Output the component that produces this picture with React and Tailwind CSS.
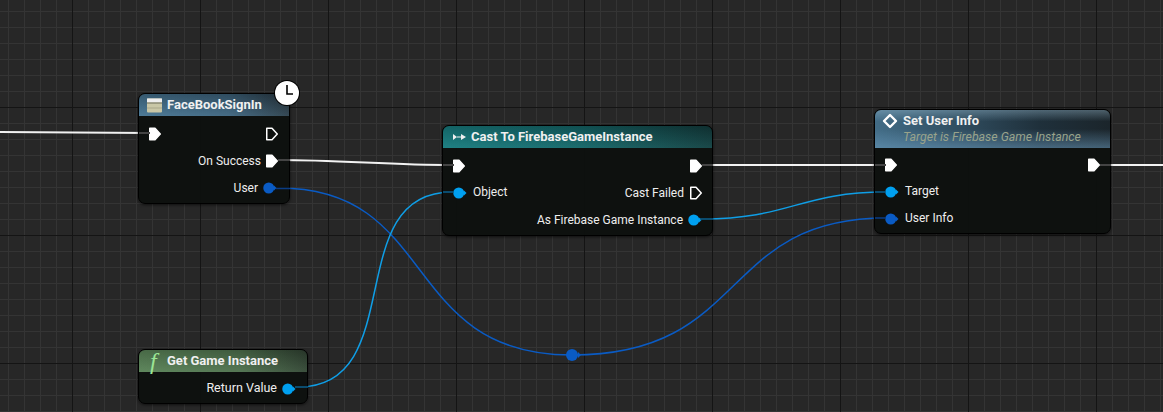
const grid =
  'bg-[#272727] bg-[linear-gradient(to_right,#141414_1px,transparent_1px),linear-gradient(to_bottom,#141414_1px,transparent_1px),linear-gradient(to_right,#343434_1px,transparent_1px),linear-gradient(to_bottom,#343434_1px,transparent_1px)] bg-[size:128px_128px,128px_128px,16px_16px,16px_16px] bg-[position:72px_107px,72px_107px,8px_11px,8px_11px]'

const wires = [
  { d: 'M0 132 C50 132 100 133 150 133', color: '#f2f2f2', width: 2 },
  { d: 'M278 160 C340 160 390 165 452 165', color: '#f2f2f2', width: 2 },
  { d: 'M702 165 L884 165', color: '#f2f2f2', width: 2 },
  { d: 'M1100 165 L1163 165', color: '#f2f2f2', width: 2 },
  { d: 'M279 188 C439 188 400 355 572 355', color: '#0a5bc4', width: 1.5 },
  { d: 'M572 355 C750 355 718 218 886 218', color: '#0a5bc4', width: 1.5 },
  { d: 'M298 387 C410 387 340 192 452 192', color: '#0f9ee6', width: 1.5 },
  { d: 'M702 219 C790 219 800 192 886 192', color: '#0f9ee6', width: 1.5 },
]

// dimmed part of each wire where it runs over a node
const stubs = [
  { x1: 139, x2: 150, y: 133, color: '#444444', width: 2 },
  { x1: 278, x2: 290, y: 160, color: '#444444', width: 2 },
  { x1: 443, x2: 454, y: 165, color: '#444444', width: 2 },
  { x1: 702, x2: 713, y: 165, color: '#444444', width: 2 },
  { x1: 875, x2: 886, y: 165, color: '#444444', width: 2 },
  { x1: 1100, x2: 1111, y: 165, color: '#444444', width: 2 },
  { x1: 276, x2: 290, y: 188.5, color: '#0a3c84', width: 1.5 },
  { x1: 295, x2: 308, y: 387, color: '#0b5f8c', width: 1.5 },
  { x1: 443, x2: 454, y: 192, color: '#0b5f8c', width: 1.5 },
  { x1: 700, x2: 713, y: 219, color: '#0b5f8c', width: 1.5 },
  { x1: 875, x2: 886, y: 192, color: '#0b5f8c', width: 1.5 },
  { x1: 875, x2: 886, y: 218, color: '#0a3c84', width: 1.5 },
]

function ExecPin({ filled, className = '' }) {
  return (
    <svg width="12" height="14" viewBox="0 0 12 14" className={`shrink-0 ${className}`}>
      <path
        d="M0.75 1.25 H6 L11.25 7 L6 12.75 H0.75 Z"
        fill={filled ? '#fff' : 'none'}
        stroke="#fff"
        strokeWidth="1.5"
        strokeLinejoin="round"
      />
    </svg>
  )
}

function DataPin({ color, className = '' }) {
  return (
    <svg width="14" height="12" viewBox="0 0 14 12" className={`shrink-0 ${className}`}>
      <circle cx="5.75" cy="6" r="5.5" fill={color} />
      <path d="M11 3.5 L13.5 6 L11 8.5 Z" fill={color} />
    </svg>
  )
}

function Row({ right, className = '', children }) {
  return (
    <div className={`flex h-[27px] items-center gap-[5px] ${right ? 'justify-end' : ''} ${className}`}>
      {children}
    </div>
  )
}

function InputLabel({ children }) {
  return <span className="mb-[2px] ml-px">{children}</span>
}

function Node({ className, header, children }) {
  return (
    <div className={`absolute flex flex-col rounded-[7px] border border-black bg-[#0d100e]/95 shadow-[0_1px_3px_rgba(0,0,0,0.6)] ${className}`}>
      {header}
      {children}
    </div>
  )
}

export default function App() {
  return (
    <div className={`relative h-[412px] w-[1163px] overflow-hidden font-['Roboto',sans-serif] text-[12px] text-[#eeeeee] ${grid}`}>
      <svg width="1163" height="412" className="absolute left-0 top-0" fill="none">
        {wires.map((w) => (
          <path key={w.d} d={w.d} stroke={w.color} strokeWidth={w.width} />
        ))}
      </svg>

      <Node
        className="left-[138px] top-[93px] h-[111px] w-[152px]"
        header={
          <div className="flex h-[22px] items-center gap-[5px] rounded-t-[6px] bg-[linear-gradient(to_bottom,rgba(0,0,0,0.2),rgba(120,170,200,0.18)),linear-gradient(to_right,#44708c,#3b5f77_60%,#27343c)] pl-[8px] text-[13px] font-bold text-[#f0f0f0]">
            <svg width="15" height="15" viewBox="0 0 15 15">
              <rect x="0" y="0.5" width="15" height="14" rx="1" fill="#c9c7a6" />
              <rect x="0" y="0.5" width="15" height="4" fill="#eeeeee" />
              <rect x="0" y="4.5" width="15" height="1" fill="#6d6c58" />
              <rect x="0" y="9.5" width="15" height="1" fill="#a9a78a" />
            </svg>
            FaceBookSignIn
          </div>
        }
      >
        <div className="flex flex-col pl-[10px] pr-[11px] pt-[4px]">
          <Row className="justify-between">
            <ExecPin filled />
            <ExecPin />
          </Row>
          <Row right>
            On Success
            <ExecPin filled />
          </Row>
          <Row right>
            User
            <DataPin color="#0a5bc4" className="mr-px" />
          </Row>
        </div>
      </Node>

      <div className="absolute left-[275px] top-[81px] flex h-[24px] w-[24px] items-center justify-center rounded-full bg-white shadow-[0_0_0_1px_#000]">
        <svg width="24" height="24" viewBox="0 0 24 24" fill="none">
          <path d="M12 4 V13 H18" stroke="#000" strokeWidth="1.6" />
        </svg>
      </div>

      <Node
        className="left-[442px] top-[125px] h-[111px] w-[271px]"
        header={
          <div className="flex h-[22px] items-center gap-[5px] rounded-t-[6px] bg-[linear-gradient(to_bottom,rgba(0,0,0,0.18),rgba(90,190,190,0.12)),linear-gradient(to_right,#17797c,#146264_50%,#12393a)] pl-[10px] text-[13px] font-bold text-[#f0f0f0]">
            <svg width="13" height="8" viewBox="0 0 13 8" fill="#f0f0f0">
              <path d="M0 1 L4 4 L0 7 Z M4 3.4 H8 V4.6 H4 Z M8 1 L13 4 L8 7 Z" />
            </svg>
            Cast To FirebaseGameInstance
          </div>
        }
      >
        <div className="flex flex-col pl-[10px] pr-[10px] pt-[4px]">
          <Row className="justify-between">
            <ExecPin filled />
            <ExecPin filled />
          </Row>
          <div className="flex h-[27px] items-center justify-between">
            <span className="flex items-center gap-[5px]">
              <DataPin color="#00a0f0" />
              <InputLabel>Object</InputLabel>
            </span>
            <span className="flex items-center gap-[6px]">
              Cast Failed
              <ExecPin />
            </span>
          </div>
          <Row right>
            As Firebase Game Instance
            <DataPin color="#00a0f0" />
          </Row>
        </div>
      </Node>

      <Node
        className="left-[874px] top-[109px] h-[125px] w-[237px]"
        header={
          <div className="flex h-[38px] flex-col rounded-t-[6px] bg-[linear-gradient(to_bottom,rgba(170,205,225,0.35),transparent_30%,transparent_50%,rgba(110,160,195,0.5)),linear-gradient(to_right,#426c86,#1f303b_70%,#1b252b)] pl-[28px] pt-[2px]">
            <div className="relative text-[13px] font-bold leading-[17px] text-[#f0f0f0]">
              <svg width="16" height="16" viewBox="0 0 16 16" fill="none" className="absolute left-[-21px] top-[1px]">
                <path d="M8 2 L14 8 L8 14 L2 8 Z" stroke="#fff" strokeWidth="2.4" strokeLinejoin="round" />
              </svg>
              Set User Info
            </div>
            <div className="text-[12.35px] italic leading-[17px] text-[#99a38b]">Target is Firebase Game Instance</div>
          </div>
        }
      >
        <div className="flex flex-col pl-[10px] pr-[10px] pt-[3px]">
          <Row className="justify-between">
            <ExecPin filled />
            <ExecPin filled />
          </Row>
          <Row>
            <DataPin color="#00a0f0" />
            <InputLabel>Target</InputLabel>
          </Row>
          <Row>
            <DataPin color="#0a5bc4" />
            <InputLabel>User Info</InputLabel>
          </Row>
        </div>
      </Node>

      <Node
        className="left-[138px] top-[349px] h-[55px] w-[170px]"
        header={
          <div className="flex h-[22px] items-center gap-[5px] rounded-t-[6px] bg-[linear-gradient(to_bottom,rgba(0,0,0,0.15),rgba(170,220,170,0.12)),linear-gradient(to_right,#557c53,#4a6a49_60%,#2d3d2f)] pl-[11px] text-[13px] font-bold text-[#f0f0f0]">
            <span className="w-[12px] font-['Liberation_Serif',serif] text-[24px] font-normal italic leading-none text-[#9be695]">f</span>
            Get Game Instance
          </div>
        }
      >
        <div className="flex flex-col pr-[11px] pt-[3px]">
          <Row right className="text-[12.5px]">
            Return Value
            <DataPin color="#00a0f0" />
          </Row>
        </div>
      </Node>

      <svg width="1163" height="412" className="pointer-events-none absolute left-0 top-0" fill="none">
        {stubs.map((s) => (
          <line key={`${s.x1}-${s.y}`} x1={s.x1} x2={s.x2} y1={s.y} y2={s.y} stroke={s.color} strokeWidth={s.width} />
        ))}
        <circle cx="572" cy="355" r="6" fill="#0a5bc4" />
        <path d="M578 352 L581 355 L578 358 Z" fill="#0a5bc4" />
      </svg>
    </div>
  )
}
